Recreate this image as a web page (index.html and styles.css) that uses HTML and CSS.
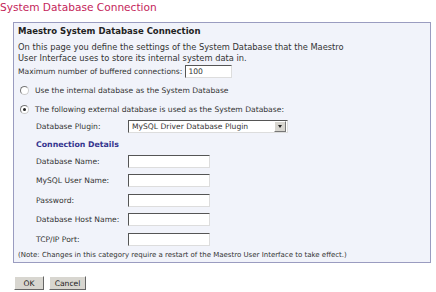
FILE: index.html
```html
<!DOCTYPE html>
<html lang="en">
<head>
  <meta charset="UTF-8">
  <title>System Database Connection</title>
  <link rel="stylesheet" href="styles.css">
</head>
<body>
  <h2 class="page-title">System Database Connection</h2>

  <!-- Settings Panel -->
  <div class="panel">
    <div class="panel-title">Maestro System Database Connection</div>
    <p class="intro">On this page you define the settings of the System Database that the Maestro<br>User Interface uses to store its internal system data in.</p>

    <div class="buffer-row">
      <span>Maximum number of buffered connections:</span>
      <span class="input short">100</span>
    </div>

    <div class="radio-row">
      <span class="radio"></span>
      <span>Use the internal database as the System Database</span>
    </div>
    <div class="radio-row second">
      <span class="radio checked"></span>
      <span>The following external database is used as the System Database:</span>
    </div>

    <div class="external">
      <div class="field">
        <span class="label">Database Plugin:</span>
        <span class="select">MySQL Driver Database Plugin<span class="arrow"></span></span>
      </div>

      <div class="section-title">Connection Details</div>

      <div class="field">
        <span class="label">Database Name:</span>
        <span class="input"></span>
      </div>
      <div class="field">
        <span class="label">MySQL User Name:</span>
        <span class="input"></span>
      </div>
      <div class="field">
        <span class="label">Password:</span>
        <span class="input"></span>
      </div>
      <div class="field">
        <span class="label">Database Host Name:</span>
        <span class="input"></span>
      </div>
      <div class="field">
        <span class="label">TCP/IP Port:</span>
        <span class="input"></span>
      </div>
    </div>

    <p class="note">(Note: Changes in this category require a restart of the Maestro User Interface to take effect.)</p>
  </div>

  <!-- Buttons -->
  <div class="buttons">
    <button class="btn ok">OK</button>
    <button class="btn cancel">Cancel</button>
  </div>
</body>
</html>
```

FILE: styles.css
```css
/* General Styles */
body {
  margin: 0;
  font-family: 'DejaVu Sans', Verdana, sans-serif;
  font-size: 7.6px;
  color: #333;
  background-color: #fff;
}

.page-title {
  margin: 0;
  height: 22px;
  font-size: 10.6px;
  font-weight: normal;
  color: #c4245a;
  line-height: 15px;
}

/* Panel */
.panel {
  margin-left: 13px;
  width: 418px;
  border: 1px solid #9a9cc0;
  background-color: #f1f3fa;
  padding: 2px 3px 1px 3px;
  box-sizing: border-box;
}

.panel-title {
  font-weight: bold;
  font-size: 8.5px;
  line-height: 12px;
  margin-left: 1px;
  color: #222;
}

.intro {
  margin: 5px 0 0 1px;
  font-size: 8.3px;
  line-height: 11px;
}

.buffer-row {
  display: flex;
  align-items: center;
  gap: 3px;
  height: 13px;
  margin: 1px 0 0 1px;
}

.input {
  display: inline-block;
  width: 78px;
  height: 11px;
  line-height: 11px;
  padding-left: 2px;
  background-color: #fff;
  border: 1px solid;
  border-color: #555 #ddd #ddd #555;
}

.input.short {
  width: 43px;
}

/* Radio Buttons */
.radio-row {
  display: flex;
  align-items: center;
  gap: 6px;
  height: 12px;
  margin: 6px 0 0 3px;
}

.radio-row.second {
  margin-top: 7px;
}

.radio {
  width: 7px;
  height: 7px;
  border-radius: 50%;
  border: 1px solid;
  border-color: #777 #ccc #ccc #777;
  background-color: #fff;
  position: relative;
}

.radio.checked::after {
  content: "";
  position: absolute;
  left: 2px;
  top: 2px;
  width: 3px;
  height: 3px;
  border-radius: 50%;
  background-color: #222;
}

/* External DB Details */
.external {
  margin-left: 19px;
  margin-top: 2px;
}

.field {
  display: flex;
  align-items: center;
  height: 19.5px;
}

.label {
  width: 92px;
}

.select {
  position: relative;
  display: inline-block;
  width: 155px;
  height: 11px;
  line-height: 11px;
  padding-left: 3px;
  background-color: #fff;
  border: 1px solid;
  border-color: #555 #ddd #ddd #555;
}

.select .arrow {
  position: absolute;
  right: 1px;
  top: 0;
  width: 10px;
  height: 9px;
  background-color: #d8d6d0;
  border: 1px solid;
  border-color: #fff #777 #777 #fff;
}

.select .arrow::after {
  content: "";
  position: absolute;
  left: 3px;
  top: 3px;
  border-left: 2px solid transparent;
  border-right: 2px solid transparent;
  border-top: 3px solid #222;
}

.section-title {
  font-weight: bold;
  font-size: 7.8px;
  color: #35358f;
  height: 15px;
  line-height: 15px;
}

.note {
  margin: 1px 0 0 1px;
  font-size: 7px;
  line-height: 11px;
}

/* Buttons */
.buttons {
  display: flex;
  gap: 5px;
  margin: 13px 0 0 14px;
}

.btn {
  font-family: 'DejaVu Sans', Verdana, sans-serif;
  font-size: 7.6px;
  height: 14px;
  padding: 0;
  background-color: #d8d6d0;
  border: 1px solid;
  border-color: #fff #666 #666 #fff;
  color: #222;
}

.btn.ok {
  width: 30px;
}

.btn.cancel {
  width: 37px;
}
```
